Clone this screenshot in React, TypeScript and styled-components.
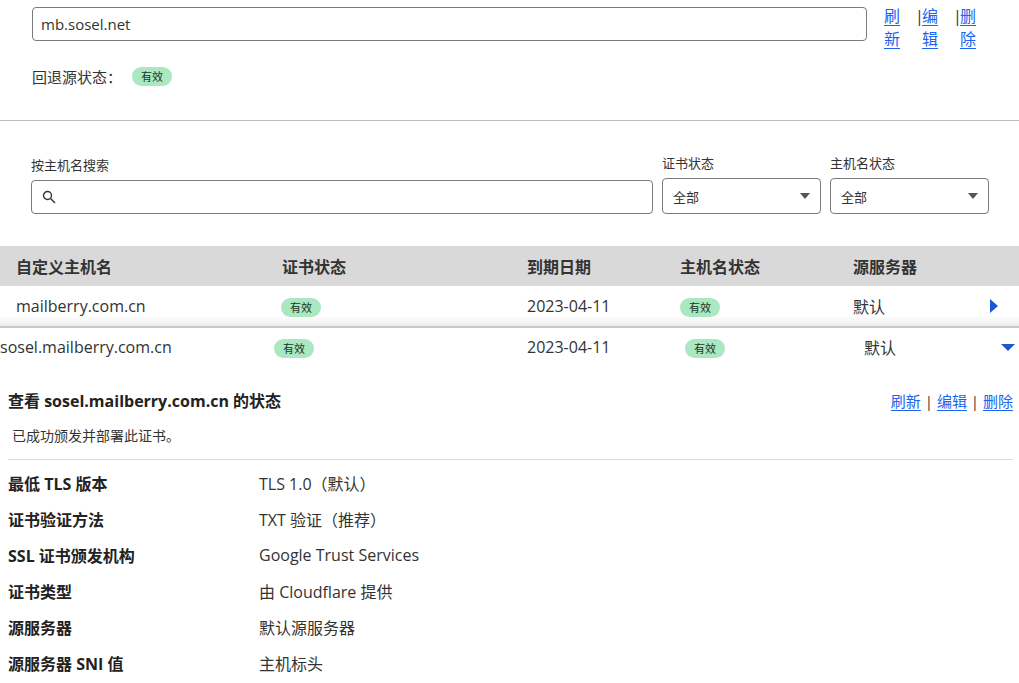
import styled, { createGlobalStyle } from 'styled-components'

const GlobalStyle = createGlobalStyle`
  body {
    margin: 0;
    background: #fff;
    color: #222;
    font-family: "Segoe UI", "Open Sans", "Noto Sans CJK SC", sans-serif;
  }
`

const Page = styled.div`
  width: 1019px;
  overflow: hidden;
`

const Fallback = styled.section`
  padding: 7px 32px 0 32px;
  height: 113px;
  border-bottom: 1px solid #bdbdbd;
`

const HostRow = styled.div`
  display: flex;
  align-items: flex-start;
`

const HostInput = styled.div`
  flex: 0 0 835px;
  height: 34px;
  box-sizing: border-box;
  border: 1px solid #7a7a7a;
  border-radius: 4px;
  padding: 0 8px;
  display: flex;
  align-items: center;
  font-size: 15px;
  color: #333;
`

const StackLinks = styled.div`
  display: flex;
  margin-left: 17px;
  margin-top: -2px;
  font-size: 16px;
  line-height: 23px;
`

const StackLink = styled.a<{ $sep?: boolean }>`
  width: 16px;
  margin-left: ${(p) => (p.$sep ? '22px' : '0')};
  color: #1a64f0;
  text-decoration: underline;
  text-underline-offset: 3px;
  word-break: break-all;
  position: relative;
  &::before {
    content: ${(p) => (p.$sep ? "'|'" : 'none')};
    position: absolute;
    left: -7px;
    top: 0;
    color: #333;
  }
`

const FallbackStatus = styled.div`
  margin-top: 15px;
  display: flex;
  align-items: center;
  font-size: 15px;
  color: #333;
  gap: 10px;
`

const Badge = styled.span`
  display: inline-block;
  background: #aae8c1;
  color: #1c3326;
  font-size: 11px;
  line-height: 19px;
  padding: 0 9px;
  border-radius: 10px;
`

const Filters = styled.div`
  display: flex;
  align-items: flex-end;
  gap: 9px;
  padding: 32px 0 0 31px;
`

const Field = styled.div<{ $w: number }>`
  width: ${(p) => p.$w}px;
  display: flex;
  flex-direction: column;
  gap: 6px;
`

const FieldLabel = styled.label`
  font-size: 13px;
  color: #333;
`

const Box = styled.div<{ $h: number }>`
  height: ${(p) => p.$h}px;
  box-sizing: border-box;
  border: 1px solid #7a7a7a;
  border-radius: 4px;
  display: flex;
  align-items: center;
  padding: 0 10px;
  font-size: 13px;
  color: #333;
`

const Caret = styled.span`
  margin-left: auto;
  width: 0;
  height: 0;
  border-left: 5px solid transparent;
  border-right: 5px solid transparent;
  border-top: 6px solid #555;
`

const Table = styled.div`
  margin-top: 32px;
`

const Head = styled.div`
  display: grid;
  grid-template-columns: 266px 245px 153px 173px 1fr;
  padding-left: 16px;
  height: 40px;
  align-items: center;
  background: #d9d9d9;
  font-size: 16px;
  font-weight: 700;
  color: #333;
`

const Row = styled.div<{ $cols: string; $pad: number; $open?: boolean }>`
  display: grid;
  box-sizing: border-box;
  grid-template-columns: ${(p) => p.$cols};
  padding-left: ${(p) => p.$pad}px;
  height: ${(p) => (p.$open ? 42 : 40)}px;
  align-items: center;
  font-size: 16px;
  color: #333;
  ${(p) =>
    p.$open
      ? 'padding-bottom: 4px;'
      : `
    height: 42px;
    background: linear-gradient(to bottom, #fff 0, #fff 30px, #ececec 40px);
    border-bottom: 2px solid #c8c8c8;
  `}
`

const Toggle = styled.span<{ $open?: boolean }>`
  justify-self: end;
  width: 0;
  height: 0;
  ${(p) =>
    p.$open
      ? `
    margin-right: 4px;
    border-left: 7px solid transparent;
    border-right: 7px solid transparent;
    border-top: 7px solid #1a56d6;
  `
      : `
    margin-right: 21px;
    border-top: 7px solid transparent;
    border-bottom: 7px solid transparent;
    border-left: 8px solid #1a56d6;
  `}
`

const Detail = styled.div`
  padding: 18px 6px 0 8px;
`

const DetailHead = styled.div`
  display: flex;
  align-items: center;
  justify-content: space-between;
  height: 24px;
`

const DetailTitle = styled.h3`
  margin: 0;
  font-size: 16px;
  font-weight: 700;
  color: #222;
`

const InlineLinks = styled.div`
  font-size: 15px;
  color: #333;
  a {
    color: #1a64f0;
    text-decoration: underline;
    text-underline-offset: 3px;
  }
`

const Notice = styled.p`
  margin: 13px 0 0 4px;
  font-size: 14px;
  color: #333;
`

const Divider = styled.hr`
  margin: 14px 0 0 0;
  border: none;
  border-top: 1px solid #dcdcdc;
`

const Props = styled.dl`
  margin: 5px 0 0 0;
  display: grid;
  grid-template-columns: 251px 1fr;
  grid-auto-rows: 36px;
  align-items: center;
  font-size: 16px;
`

const PropName = styled.dt`
  font-weight: 700;
  color: #222;
`

const PropValue = styled.dd`
  margin: 0;
  color: #333;
`

const props: [string, string][] = [
  ['最低 TLS 版本', 'TLS 1.0（默认）'],
  ['证书验证方法', 'TXT 验证（推荐）'],
  ['SSL 证书颁发机构', 'Google Trust Services'],
  ['证书类型', '由 Cloudflare 提供'],
  ['源服务器', '默认源服务器'],
  ['源服务器 SNI 值', '主机标头'],
]

const SearchIcon = () => (
  <svg width="14" height="14" viewBox="0 0 14 14" fill="none" stroke="#333" strokeWidth="1.4">
    <circle cx="5.5" cy="5.5" r="4" />
    <line x1="8.5" y1="8.5" x2="13" y2="13" />
  </svg>
)

const App = () => {
  return (
    <>
      <GlobalStyle />
      <Page>
        <Fallback>
          <HostRow>
            <HostInput>mb.sosel.net</HostInput>
            <StackLinks>
              <StackLink href="#">刷新</StackLink>
              <StackLink href="#" $sep>
                编辑
              </StackLink>
              <StackLink href="#" $sep>
                删除
              </StackLink>
            </StackLinks>
          </HostRow>
          <FallbackStatus>
            回退源状态：<Badge>有效</Badge>
          </FallbackStatus>
        </Fallback>

        <Filters>
          <Field $w={622}>
            <FieldLabel>按主机名搜索</FieldLabel>
            <Box $h={34}>
              <SearchIcon />
            </Box>
          </Field>
          <Field $w={159}>
            <FieldLabel>证书状态</FieldLabel>
            <Box $h={36}>
              全部
              <Caret />
            </Box>
          </Field>
          <Field $w={159}>
            <FieldLabel>主机名状态</FieldLabel>
            <Box $h={36}>
              全部
              <Caret />
            </Box>
          </Field>
        </Filters>

        <Table>
          <Head>
            <span>自定义主机名</span>
            <span>证书状态</span>
            <span>到期日期</span>
            <span>主机名状态</span>
            <span>源服务器</span>
          </Head>
          <Row $cols="265px 246px 153px 173px 100px 1fr" $pad={16}>
            <span>mailberry.com.cn</span>
            <span>
              <Badge>有效</Badge>
            </span>
            <span>2023-04-11</span>
            <span>
              <Badge>有效</Badge>
            </span>
            <span>默认</span>
            <Toggle />
          </Row>
          <Row $cols="274px 253px 158px 179px 100px 1fr" $pad={0} $open>
            <span>sosel.mailberry.com.cn</span>
            <span>
              <Badge>有效</Badge>
            </span>
            <span>2023-04-11</span>
            <span>
              <Badge>有效</Badge>
            </span>
            <span>默认</span>
            <Toggle $open />
          </Row>
        </Table>

        <Detail>
          <DetailHead>
            <DetailTitle>查看 sosel.mailberry.com.cn 的状态</DetailTitle>
            <InlineLinks>
              <a href="#">刷新</a> | <a href="#">编辑</a> | <a href="#">删除</a>
            </InlineLinks>
          </DetailHead>
          <Notice>已成功颁发并部署此证书。</Notice>
          <Divider />
          <Props>
            {props.map(([k, v]) => (
              <>
                <PropName key={k}>{k}</PropName>
                <PropValue key={k + 'v'}>{v}</PropValue>
              </>
            ))}
          </Props>
        </Detail>
      </Page>
    </>
  )
}

export default App
